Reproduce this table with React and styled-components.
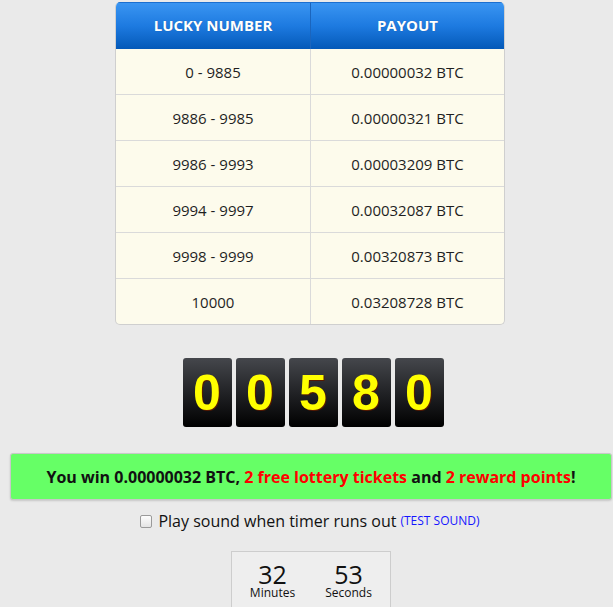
import React from "react";
import styled, { createGlobalStyle } from "styled-components";

const Global = createGlobalStyle`
  html, body { margin: 0; padding: 0; }
  body {
    background: #eaeaea;
    font-family: "Open Sans", "Liberation Sans", sans-serif;
    color: #222;
  }
`;

const Page = styled.div`
  width: 602px;
  padding: 2px 1px 0 10px;
  display: flex;
  flex-direction: column;
  align-items: center;
`;

const Table = styled.div`
  width: 388px;
  border: 1px solid #cfcfcf;
  border-top: none;
  border-radius: 5px;
  overflow: hidden;
  background: #fdfbec;
  margin-left: -2px;
`;

const HeadRow = styled.div`
  display: grid;
  grid-template-columns: 1fr 1fr;
  height: 46px;
  background: linear-gradient(to bottom, #3a95f2 0%, #1d7ae0 50%, #0459b8 100%);
  border-top: 1px solid #1b6fd0;
`;

const HeadCell = styled.div`
  display: flex;
  align-items: center;
  justify-content: center;
  color: #fff;
  font-weight: 700;
  font-size: 15px;
  padding-bottom: 2px;
  text-shadow: 0 0 1px rgba(0,0,0,0.3);
  border-left: ${p => (p.$first ? "none" : "1px solid #1b65bd")};
`;

const Row = styled.div`
  display: grid;
  grid-template-columns: 1fr 1fr;
  height: 45px;
  border-top: ${p => (p.$first ? "none" : "1px solid #dadada")};
`;

const Cell = styled.div`
  display: flex;
  align-items: center;
  justify-content: center;
  font-size: 15px;
  color: #1f1f1f;
  border-left: ${p => (p.$first ? "none" : "1px solid #dadada")};
`;

const Digits = styled.div`
  display: flex;
  gap: 4px;
  margin-top: 33px;
  margin-left: 4px;
`;

const Digit = styled.div`
  width: 49px;
  height: 69px;
  border-radius: 3px;
  background: linear-gradient(to bottom, #45474c 0%, #1e1f22 55%, #000 100%);
  display: flex;
  align-items: center;
  justify-content: center;
  font-family: "Liberation Sans", Arial, sans-serif;
  font-weight: 700;
  font-size: 50px;
  color: #ffff00;
  text-shadow: 1px 1px 0 #5a1a00;
  padding-top: 1px;
  box-sizing: border-box;
`;

const WinBox = styled.div`
  align-self: stretch;
  margin-top: 26px;
  height: 47px;
  box-sizing: border-box;
  background: #66ff66;
  border: 1px solid #c8c8c8;
  border-radius: 3px;
  box-shadow: 0 1px 2px rgba(0,0,0,0.15);
  display: flex;
  align-items: center;
  justify-content: center;
  font-weight: 700;
  font-size: 16px;
  color: #111;
`;

const Red = styled.span`
  color: #ff0000;
`;

const SoundRow = styled.div`
  margin-top: 10px;
  font-size: 16px;
  line-height: 22px;
  color: #111;
  text-align: center;
  margin-left: -2px;
  white-space: nowrap;
`;

const Check = styled.span`
  display: inline-block;
  width: 10px;
  height: 11px;
  border: 1px solid #9a9a9a;
  border-radius: 2px;
  background: linear-gradient(#fdfdfd, #e4e4e4);
  margin-right: 6px;
  vertical-align: -1px;
`;

const TestLink = styled.span`
  font-size: 12px;
  color: #1515ff;
  margin-left: 4px;
  vertical-align: 2px;
`;

const Timer = styled.div`
  margin-top: 19px;
  width: 160px;
  height: 80px;
  box-sizing: border-box;
  border: 1px solid #cdcdcd;
  border-bottom: none;
  background: #eeeeee;
  display: flex;
  justify-content: center;
  gap: 26px;
  padding-top: 9px;
  margin-left: -1px;
`;

const Unit = styled.div`
  width: 50px;
  display: flex;
  flex-direction: column;
  align-items: center;
`;

const Amount = styled.div`
  font-size: 25px;
  line-height: 26px;
  color: #111;
`;

const Label = styled.div`
  font-size: 12px;
  line-height: 11px;
  color: #111;
`;

const rows = [
  ["0 - 9885", "0.00000032 BTC"],
  ["9886 - 9985", "0.00000321 BTC"],
  ["9986 - 9993", "0.00003209 BTC"],
  ["9994 - 9997", "0.00032087 BTC"],
  ["9998 - 9999", "0.00320873 BTC"],
  ["10000", "0.03208728 BTC"],
];

export default function App() {
  return (
    <>
      <Global />
      <Page>
        <Table>
          <HeadRow>
            <HeadCell $first>LUCKY NUMBER</HeadCell>
            <HeadCell>PAYOUT</HeadCell>
          </HeadRow>
          {rows.map((r, i) => (
            <Row key={i} $first={i === 0}>
              <Cell $first>{r[0]}</Cell>
              <Cell>{r[1]}</Cell>
            </Row>
          ))}
        </Table>
        <Digits>
          {["0", "0", "5", "8", "0"].map((d, i) => (
            <Digit key={i}>{d}</Digit>
          ))}
        </Digits>
        <WinBox>
          You win 0.00000032 BTC,&nbsp;<Red>2 free lottery tickets</Red>&nbsp;and&nbsp;<Red>2 reward points</Red>!
        </WinBox>
        <SoundRow>
          <Check />
          Play sound when timer runs out
          <TestLink>(TEST SOUND)</TestLink>
        </SoundRow>
        <Timer>
          <Unit>
            <Amount>32</Amount>
            <Label>Minutes</Label>
          </Unit>
          <Unit>
            <Amount>53</Amount>
            <Label>Seconds</Label>
          </Unit>
        </Timer>
      </Page>
    </>
  );
}
